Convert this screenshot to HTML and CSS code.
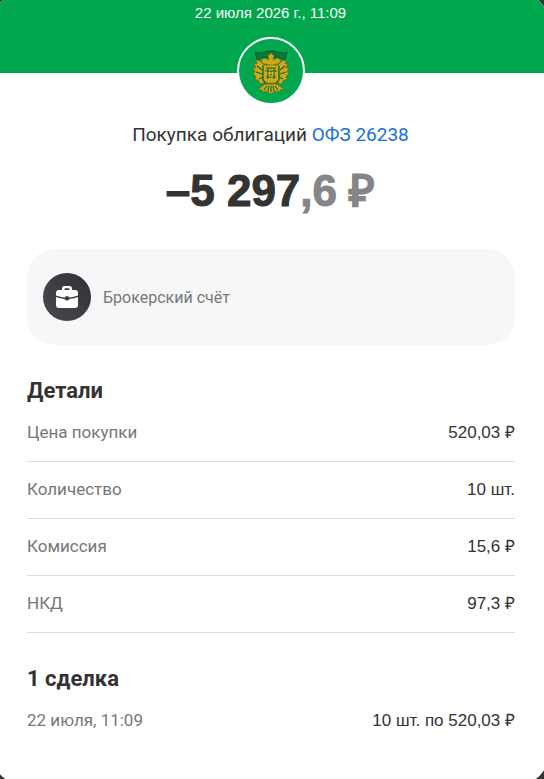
FILE: index.html
```html
<!DOCTYPE html>
<html lang="ru">
<head>
<meta charset="utf-8">
<meta name="viewport" content="width=device-width, initial-scale=1">
<title>Покупка облигаций</title>
<link rel="stylesheet" href="styles.css">
</head>
<body>
<main class="sheet">
  <header class="banner">
    <time class="banner-date">22 июля 2026 г., 11:09</time>
    <div class="emblem">
      <svg viewBox="0 0 64 64" aria-hidden="true">
        <path fill="#087b35" stroke="#08592c" d="M16 13c5 3 8-1 16-1s11 4 16 1l-2 8-7-3-7 1-7-1-7 3z"/>
        <g fill="#d0a81a" stroke="#6f6a18" stroke-width=".7">
          <path d="m32 14 3 3-1 4 5-2 3 3-3 3h-3l-2 3h-4l-2-3h-3l-3-3 3-3 5 2-1-4z"/>
          <path d="M25 26c-3-4-6-5-8-5l1 4-3-1 2 5-3-1 2 5-2 1 3 4-1 2 4 2 1 3 4-1zM39 26c3-4 6-5 8-5l-1 4 3-1-2 5 3-1-2 5 2 1-3 4 1 2-4 2-1 3-4-1z"/>
          <path d="M24 26h16v15l-4 5h-8l-4-5z"/>
          <path d="m28 44-9 6 4 1 1 2 4-1 4 3 4-3 4 1 1-2 4-1-9-6z"/>
        </g>
        <path fill="none" stroke="#176c2d" stroke-width="1.2" d="M27 29h10M27 38h10M29 29v11m3-11v9m3-9v11M26 32h12M18 27l5 4m-6 2 6 2m-3 5 4-2M46 27l-5 4m6 2-6 2m3 5-4-2M25 43l3 2h8l3-2M28 47l-3 4m5-4-1 5m3-5v6m2-6 1 5m1-5 3 4M24 27v14l4 4M40 27v14l-4 4"/>
        <path fill="none" stroke="#e9c22d" d="M29 34h6M30 31h4M30 37h4"/>
      </svg>
    </div>
  </header>
  <section class="summary">
    <h1 class="title">Покупка облигаций <a class="bond" href="#">ОФЗ 26238</a></h1>
    <p class="amount">–5 297<span class="fraction">,6 ₽</span></p>
  </section>
  <section class="account">
    <svg class="account-icon" viewBox="0 0 48 48" aria-hidden="true">
      <defs><linearGradient id="g" x1="0" y1="1" x2="1" y2="0"><stop stop-color="#4a4a4f"/><stop offset="1" stop-color="#303035"/></linearGradient></defs>
      <circle cx="24" cy="24" r="24" fill="url(#g)"/>
      <path fill="#fff" fill-rule="evenodd" d="M19 17v-1.500q0-2.500 2.500-2.500h5q2.500 0 2.500 2.500V17h3q3 0 3 3v2.500q-4 1.500-8.500 2-1-1.500-2.500-1.500t-2.500 1.500q-4.500-.5-8.500-2V20q0-3 3-3zm2.500 0h5v-1q0-.8-.8-.8h-3.400q-.8 0-.8.8zM13 24q4 1.500 8.500 2 1 1.500 2.500 1.500t2.500-1.500q4.500-.5 8.500-2v8q0 3-3 3H16q-3 0-3-3z"/>
    </svg>
    <span class="account-name">Брокерский счёт</span>
  </section>
  <section class="block">
    <h2 class="heading">Детали</h2>
    <dl class="rows">
      <div class="row"><dt>Цена покупки</dt><dd>520,03 ₽</dd></div>
      <div class="row"><dt>Количество</dt><dd>10 шт.</dd></div>
      <div class="row"><dt>Комиссия</dt><dd>15,6 ₽</dd></div>
      <div class="row"><dt>НКД</dt><dd>97,3 ₽</dd></div>
    </dl>
  </section>
  <section class="block">
    <h2 class="heading">1 сделка</h2>
    <dl class="rows deals">
      <div class="row"><dt>22 июля, 11:09</dt><dd>10 шт. по 520,03 ₽</dd></div>
    </dl>
  </section>
</main>
</body>
</html>
```
FILE: styles.css
```css
* { box-sizing: border-box; }
html { background: #333; }
body {
  margin: 0;
  min-height: 100vh;
  display: flex;
  flex-direction: column;
  overflow: hidden;
  background: #333;
  color: #333;
  font-family: Roboto, "Liberation Sans", sans-serif;
}
h1, h2, p, dl, dd { margin: 0; }
/* The sheet bleeds past the window so only the tips of its corners are cut. */
.sheet {
  flex: 1;
  margin: -8px -5px -6px -8px;
  border-radius: 32px;
  overflow: hidden;
  background: #fff;
}
.banner {
  display: flex;
  flex-direction: column;
  align-items: center;
  height: 81px;
  padding-top: 13px;
  background: #00a74f;
  color: #fff;
}
.banner-date {
  font: 15px/16px "Liberation Sans", sans-serif;
}
.emblem {
  flex: none;
  width: 68px;
  height: 68px;
  margin-top: 16px;
  border: 2px solid #fff;
  border-radius: 50%;
  background: #00a74f;
}
.emblem svg { display: block; }
.summary {
  padding-top: 48px;
  text-align: center;
}
.title {
  font-size: 19px;
  font-weight: 400;
  line-height: 28px;
}
.bond { color: #1a6fd9; text-decoration: none; }
.amount {
  margin-top: 18px;
  font: 700 44px/48px "Liberation Sans", sans-serif;
  -webkit-text-stroke: 1px currentColor;
}
.fraction { color: #858585; }
.account {
  display: flex;
  align-items: center;
  gap: 12px;
  height: 96px;
  margin: 34px 34px 0 35px;
  padding: 0 16px;
  border-radius: 28px;
  background: #f6f7f9;
}
.account-icon { width: 48px; height: 48px; }
.account-name { color: #777; font-size: 16px; }
.block { margin: 32px 34px 0 35px; }
.heading {
  font-size: 22px;
  font-weight: 700;
  line-height: 28px;
}
.row {
  display: flex;
  justify-content: space-between;
  height: 57px;
  padding-top: 15px;
  border-bottom: 1px solid #ddd;
  line-height: 24px;
}
.row dt { color: #777; font-size: 17px; }
.row dd { font: 17px/26px "Liberation Sans", sans-serif; }
.deals .row { border: 0; }
```
